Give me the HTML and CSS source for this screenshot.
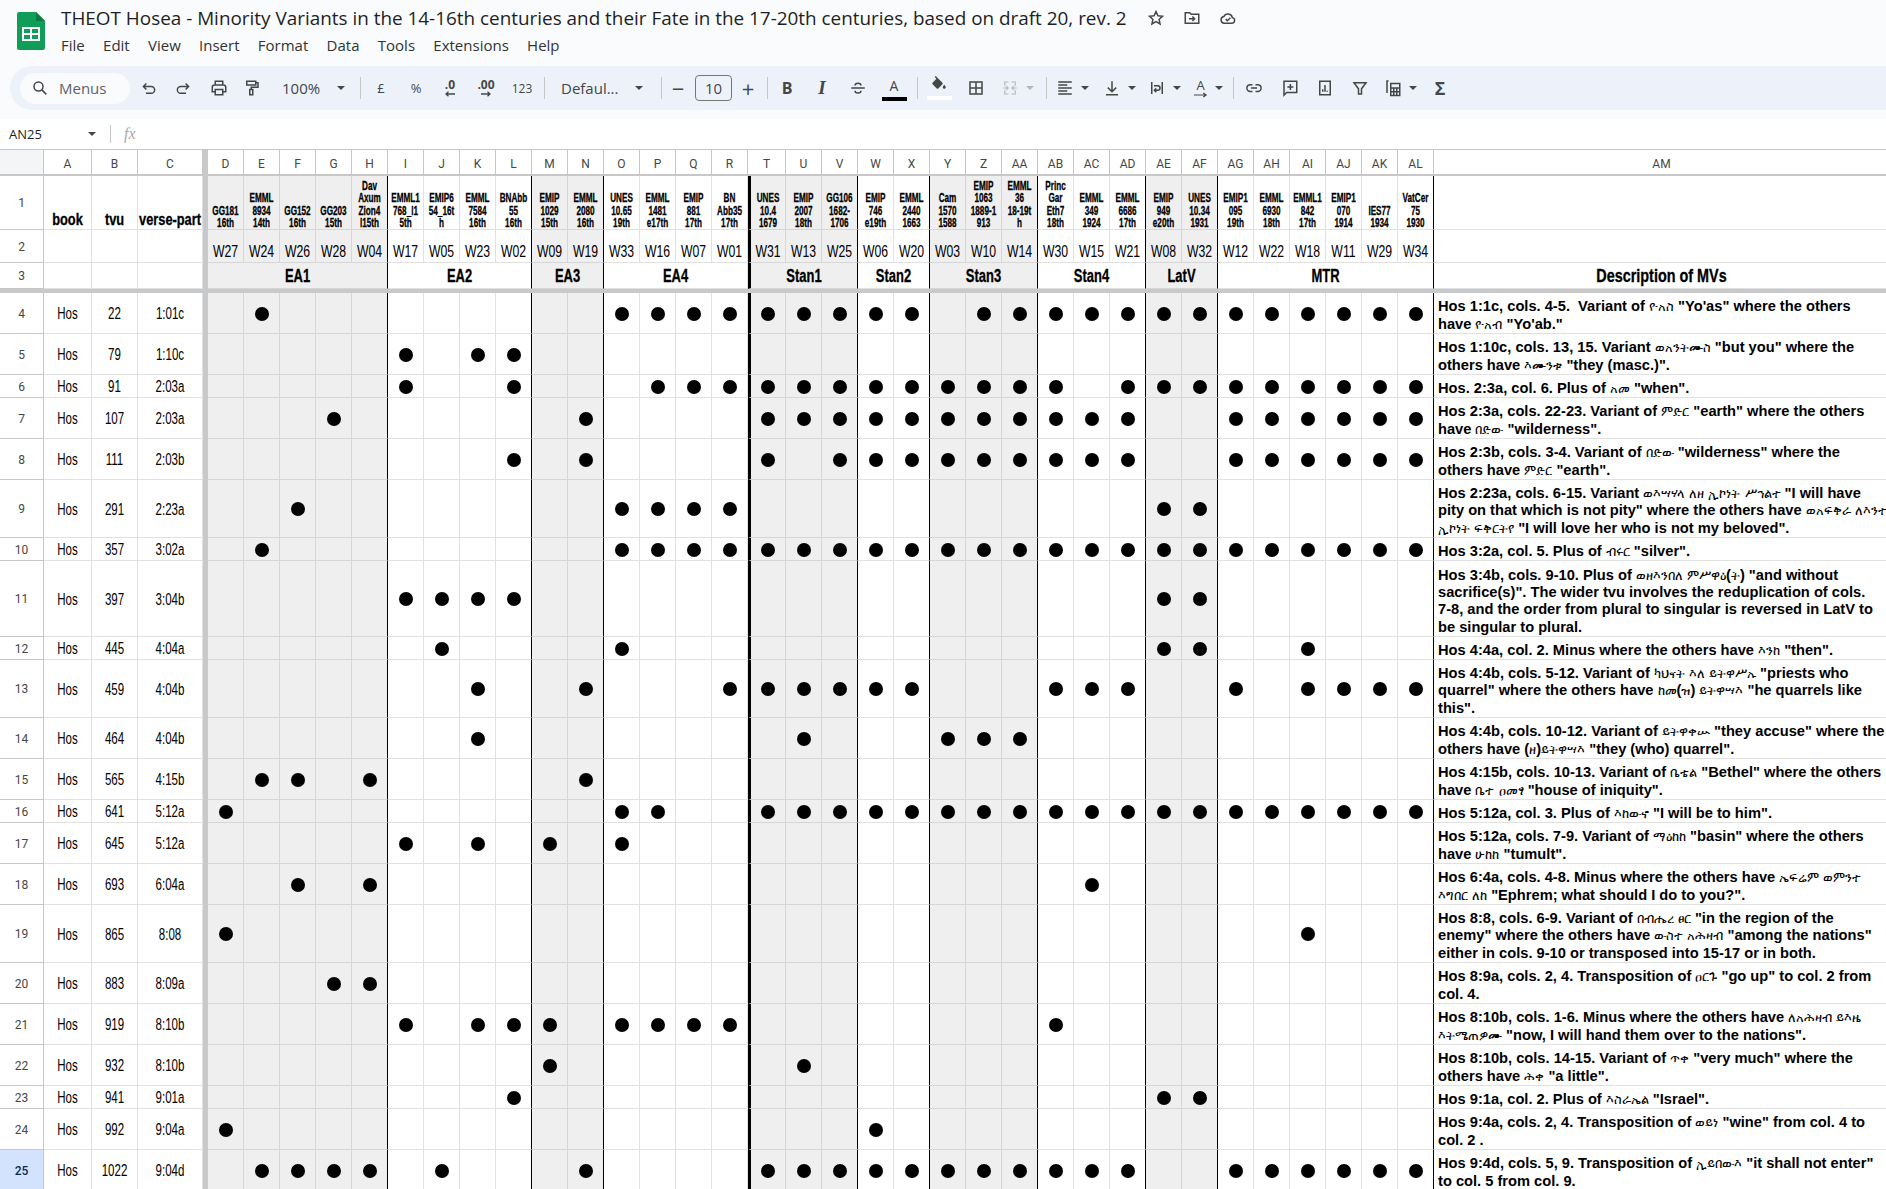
FILE: index.html
```html
<!DOCTYPE html>
<html lang="en">
<head>
    <meta charset="UTF-8">
    <title>THEOT Hosea - Google Sheets</title>
    <link rel="stylesheet" href="styles.css">
</head>
<body>
    <header class="docs-head">
        <div class="title-bar">
            <svg class="logo" viewBox="0 0 28 38"><path fill="#0f9d58" d="M2 0h17l9 9v27a2 2 0 0 1-2 2H2a2 2 0 0 1-2-2V2a2 2 0 0 1 2-2z"/><path fill="#0a7a43" d="M19 0l9 9h-9z"/><path fill="none" stroke="#fff" stroke-width="2" d="M6 16h16v12H6z M6 22h16 M14 16v12"/></svg>
            <div class="title-text">
                <div class="title-row">
                    <span class="doc-title">THEOT Hosea - Minority Variants in the 14-16th centuries and their Fate in the 17-20th centuries, based on draft 20, rev. 2</span>
                    <svg class="ic title-ic" viewBox="0 0 24 24"><path d="M12 3.500l2.600 5.600 6 .7-4.500 4.100 1.300 6-5.400-3.100-5.400 3.100 1.300-6-4.500-4.100 6-.7z"/></svg>
                    <svg class="ic title-ic" viewBox="0 0 24 24"><path d="M3 5h6l2 2h10v12H3z M8 13h7 M12.500 10l3 3-3 3"/></svg>
                    <svg class="ic title-ic" viewBox="0 0 24 24"><path d="M7 19a4.500 4.500 0 0 1-.6-8.900 6 6 0 0 1 11.400 1.400A3.800 3.800 0 0 1 17.500 19z M9 13.500l2.200 2.200 4-4"/></svg>
                </div>
                <nav class="menu-bar">
                    <span>File</span><span>Edit</span><span>View</span><span>Insert</span><span>Format</span><span>Data</span><span>Tools</span><span>Extensions</span><span>Help</span>
                </nav>
            </div>
        </div>

        <div class="toolbar">
            <div class="search-pill">
                <svg class="ic" viewBox="0 0 24 24"><circle cx="10" cy="10" r="6"/><path d="M14.500 14.500l6 6"/></svg>
                <span>Menus</span>
            </div>
            <div class="tb w34"><svg class="ic" viewBox="0 0 24 24"><path d="M8.500 6l-4 4 4 4 M4.500 10H15a4.500 4.500 0 0 1 0 9H8"/></svg></div>
            <div class="tb w34"><svg class="ic flip" viewBox="0 0 24 24"><path d="M8.500 6l-4 4 4 4 M4.500 10H15a4.500 4.500 0 0 1 0 9H8"/></svg></div>
            <div class="tb w38"><svg class="ic" viewBox="0 0 24 24"><path d="M7 8V3h10v5 M7 17H3v-6a3 3 0 0 1 3-3h12a3 3 0 0 1 3 3v6h-4 M7 14h10v7H7z"/></svg></div>
            <div class="tb w28"><svg class="ic" viewBox="0 0 24 24"><path d="M5 3h12v5H5z M17 5h3v6h-9v3 M9 14h4v7H9z"/></svg></div>
            <div class="tb-text zoom-box"><span>100%</span><i class="caret"></i></div>
            <div class="sep s6"></div>
            <div class="tb w34 ml3 txt">£</div>
            <div class="tb w36 txt">%</div>
            <div class="tb w32 dec"><b>.0</b><svg viewBox="0 0 12 6"><path d="M11 3H2 M4.500 .8L2 3l2.500 2.200"/></svg></div>
            <div class="tb w40 dec"><b>.00</b><svg viewBox="0 0 12 6"><path d="M1 3h9 M7.500 .8L10 3 7.500 5.200"/></svg></div>
            <div class="tb w32 txt small">123</div>
            <div class="sep s6"></div>
            <div class="tb-text font-box"><span>Defaul...</span><i class="caret"></i></div>
            <div class="sep s7"></div>
            <div class="tb w32 big">&minus;</div>
            <div class="size-box">10</div>
            <div class="tb w30 big">+</div>
            <div class="sep s4"></div>
            <div class="tb w38 bold">B</div>
            <div class="tb w32 ital">I</div>
            <div class="tb w40"><svg class="ic" viewBox="0 0 24 24"><path d="M8 8.500c0-2 2-3 4-3s4 1 4 3 M3 12h18 M8 15.500c0 2 2 3 4 3s4-1 4-3"/></svg></div>
            <div class="tb w32 color-a"><span>A</span><i class="bar black"></i></div>
            <div class="sep s7"></div>
            <div class="tb w42 fill-btn"><svg class="solid" viewBox="0 0 24 24"><path d="M16.560 8.940L7.620 0 6.210 1.410l2.380 2.380-5.150 5.150c-.59.59-.59 1.540 0 2.120l5.500 5.500c.29.29.68.44 1.060.44s.77-.15 1.060-.44l5.500-5.500c.59-.58.59-1.530 0-2.120zM19 11.500s-2 2.170-2 3.500c0 1.100.9 2 2 2s2-.9 2-2c0-1.330-2-3.500-2-3.500z"/></svg><i class="bar white"></i></div>
            <div class="tb w32"><svg class="ic" viewBox="0 0 24 24"><path d="M4 4h16v16H4z M12 4v16 M4 12h16"/></svg></div>
            <div class="tb split w50 off"><svg class="ic" viewBox="0 0 24 24"><path d="M5 9V4h5 M19 9V4h-5 M5 15v5h5 M19 15v5h-5 M3 12h6 M7 9.500l2.500 2.500L7 14.500 M21 12h-6 M17 9.500L14.500 12l2.500 2.500"/></svg><i class="caret"></i></div>
            <div class="sep s4"></div>
            <div class="tb split w50"><svg class="ic" viewBox="0 0 24 24"><path d="M3 4h18 M3 8h12 M3 12h18 M3 16h12 M3 20h18"/></svg><i class="caret"></i></div>
            <div class="tb split w45"><svg class="ic" viewBox="0 0 24 24"><path d="M12 3v14 M6.500 11.500L12 17l5.500-5.500 M4 21h16"/></svg><i class="caret"></i></div>
            <div class="tb split w45"><svg class="ic" viewBox="0 0 24 24"><path d="M5 4v16 M19 4v16 M8 9h5a3 3 0 0 1 0 6H9 M11 12.500L8.500 15l2.500 2.500"/></svg><i class="caret"></i></div>
            <div class="tb split w42 rot"><div class="rot-a"><span>A</span><svg viewBox="0 0 16 6"><path d="M1 3h13 M11 .8L14 3l-3 2.200"/></svg></div><i class="caret"></i></div>
            <div class="sep s4"></div>
            <div class="tb w40"><svg class="ic" viewBox="0 0 24 24"><path d="M10 7.500H7a4.500 4.500 0 0 0 0 9h3 M14 7.500h3a4.500 4.500 0 0 1 0 9h-3 M8 12h8"/></svg></div>
            <div class="tb w32"><svg class="ic" viewBox="0 0 24 24"><path d="M4 3h17v15H7.500L4 21.500z M12.500 6.500v8 M8.500 10.500h8"/></svg></div>
            <div class="tb w38"><svg class="ic" viewBox="0 0 24 24"><path d="M5 3h14v18H5z M9 17v-3.500 M12 17V8 M15 17v-1.500"/></svg></div>
            <div class="tb w32"><svg class="ic" viewBox="0 0 24 24"><path d="M4 5h16l-6 8v7h-4v-7z"/></svg></div>
            <div class="tb split w48"><svg class="ic" viewBox="0 0 24 24"><path d="M6 2.500H4v16 M9 6h12v16H9z M9 12h12 M9 17h12 M13 12v10 M17 12v10"/></svg><i class="caret"></i></div>
            <div class="tb w32 sigma">Σ</div>
        </div>
    </header>

    <div class="formula-bar">
        <span class="name-box">AN25</span>
        <i class="caret"></i>
        <div class="sep"></div>
        <span class="fx">fx</span>
    </div>

    <div class="grid-wrap">
        <table class="sheet" id="sheet">
            <colgroup id="cols"></colgroup>
            <tbody id="rows"></tbody>
        </table>
    </div>

    <script src="script.js"></script>
</body>
</html>
```

FILE: styles.css
```css
* {
    box-sizing: border-box;
}
html, body {
    margin: 0;
    height: 100%;
    overflow: hidden;
}
body {
    background: #fff;
    font-family: "Open Sans", Roboto, sans-serif;
    color: #1f1f1f;
}

/* top chrome */
.docs-head {
    height: 119px;
    background: #f9fbfd;
}
.title-bar {
    display: flex;
    height: 66px;
}
.logo {
    width: 28px;
    height: 38px;
    margin: 12px 0 0 17px;
    flex: none;
}
.title-text {
    margin-left: 16px;
}
.title-row {
    display: flex;
    align-items: center;
    height: 20px;
    margin-top: 8px;
    white-space: nowrap;
}
.doc-title {
    font-size: 18.900px;
    width: 1086px;
}
.title-ic {
    width: 18px;
    height: 18px;
    margin-right: 18px;
}
.menu-bar {
    display: flex;
    gap: 18.300px;
    margin-top: 7px;
    font-size: 15px;
    color: #333;
}
.ic {
    width: 18px;
    height: 18px;
    fill: none;
    stroke: #444746;
    stroke-width: 2;
    flex: none;
}
.flip {
    transform: scaleX(-1);
}

/* toolbar */
.toolbar {
    display: flex;
    align-items: center;
    height: 44px;
    margin-left: 10px;
    padding-left: 10px;
    background: #edf2fa;
    border-radius: 22px 0 0 22px;
    color: #444746;
    font-size: 15px;
}
.search-pill {
    display: flex;
    align-items: center;
    width: 110px;
    height: 31px;
    margin-right: 2px;
    padding-left: 11px;
    gap: 10px;
    background: #f9fbfd;
    border-radius: 16px;
    color: #5f6368;
    flex: none;
}
.tb {
    display: flex;
    align-items: center;
    justify-content: center;
    height: 30px;
    flex: none;
}
.w28 { width: 28px; }
.w30 { width: 30px; }
.w32 { width: 32px; }
.w34 { width: 34px; }
.w36 { width: 36px; }
.w38 { width: 38px; }
.w40 { width: 40px; }
.w42 { width: 42px; }
.w45 { width: 45px; }
.w48 { width: 48px; }
.w50 { width: 50px; }
.ml3 { margin-left: 3px; }
.sep {
    width: 1px;
    height: 22px;
    background: #c7c7c7;
    flex: none;
}
.s4 { margin-left: 4px; }
.s6 { margin-left: 6px; }
.s7 { margin-left: 7px; }
.caret {
    display: block;
    width: 0;
    height: 0;
    border-left: 4px solid transparent;
    border-right: 4px solid transparent;
    border-top: 4px solid #444746;
    flex: none;
}
.tb-text {
    display: flex;
    align-items: center;
    justify-content: space-between;
    height: 30px;
    flex: none;
}
.zoom-box {
    width: 88px;
    padding: 0 9px 0 16px;
}
.font-box {
    width: 109px;
    padding: 0 11px 0 16px;
}
.txt {
    font-size: 13px;
}
.small {
    font-size: 12px;
}
.dec {
    flex-direction: column;
    line-height: 12px;
    font-size: 12px;
}
.dec b {
    height: 12px;
}
.dec svg {
    width: 12px;
    height: 6px;
    fill: none;
    stroke: #444746;
    stroke-width: 1.300;
}
.big {
    font-size: 22px;
    font-weight: 400;
}
.size-box {
    width: 37px;
    height: 26px;
    margin: 0 1px;
    border: 1px solid #747775;
    border-radius: 4px;
    line-height: 24px;
    text-align: center;
    font-size: 15px;
    flex: none;
}
.bold {
    font-size: 16px;
    font-weight: 700;
}
.ital {
    font-family: "Liberation Serif", serif;
    font-size: 19px;
    font-style: italic;
    font-weight: 700;
}
.color-a, .fill-btn {
    flex-direction: column;
    height: 34px;
}
.color-a span {
    font-size: 14px;
    line-height: 20px;
}
.bar {
    display: block;
    width: 25px;
    height: 4px;
    margin-top: 1px;
}
.black { background: #000; }
.white { background: #fff; margin-top: 2px; }
.solid {
    width: 18px;
    height: 18px;
    fill: #444746;
}
.split {
    gap: 7px;
}
.off .ic {
    stroke: #b4b7ba;
    stroke-width: 1.600;
}
.off .caret {
    border-top-color: #b4b7ba;
}
.rot-a {
    display: flex;
    flex-direction: column;
    align-items: center;
    width: 14px;
    line-height: 14px;
    font-size: 13px;
}
.rot-a svg {
    width: 15px;
    height: 6px;
    fill: none;
    stroke: #444746;
    stroke-width: 1.300;
}
.sigma {
    font-size: 18px;
    font-weight: 700;
}

/* name box + formula */
.formula-bar {
    display: flex;
    align-items: center;
    height: 30px;
    padding-left: 9px;
    background: #fff;
}
.name-box {
    width: 79px;
    font-size: 13px;
    color: #1f1f1f;
}
.formula-bar .sep {
    margin-left: 14px;
    height: 18px;
}
.fx {
    margin-left: 13px;
    font-family: "Liberation Serif", serif;
    font-size: 16px;
    font-style: italic;
    color: #a5a7a9;
}

/* the grid */
.grid-wrap {
    border-top: 1px solid #c4c7c5;
}
.sheet {
    table-layout: fixed;
    width: 1890px;
    border-collapse: separate;
    border-spacing: 0;
    font-family: "Liberation Sans", sans-serif;
    color: #000;
}
.sheet td {
    padding: 0;
    border-right: 1px solid #e1e1e1;
    border-bottom: 1px solid #e1e1e1;
    text-align: center;
    vertical-align: middle;
    overflow: hidden;
    white-space: nowrap;
}
.sheet td.gray {
    background: #efefef;
    border-right-color: #d6d6d6;
    border-bottom-color: #d6d6d6;
}
.sheet td.end {
    border-right-color: #000;
}
.sheet td.thick {
    border-left: 3px solid #000;
}
.sheet td.freeze {
    background: #c7c9cb;
    border: 0;
}
.sheet td.rownum, .sheet td.colhead {
    font-family: Roboto, sans-serif;
    font-size: 12px;
    color: #444746;
    background: #fff;
    border-color: #c7c7c7;
}
.sheet td.rownum {
    padding-top: 1px;
}
.sheet td.colhead {
    border-bottom-width: 2px;
    padding-top: 3px;
}
.sheet td.corner {
    background: #f4f5f6;
}
.sheet td.current {
    background: #d3e3fd;
    color: #0b2a5b;
    font-weight: 500;
}

/* no condensed font here, so the sheet's narrow face is squeezed */
.nar {
    display: block;
    width: 300%;
    margin-left: -100%;
    transform: scaleX(.72);
}
.sheet td.ms {
    vertical-align: bottom;
    font-size: 12px;
    font-weight: 700;
    line-height: 12.200px;
    white-space: pre;
}
.sheet td.ms .nar {
    transform: scaleX(.68);
}
.sheet td.label {
    vertical-align: bottom;
    font-size: 16px;
    font-weight: 700;
}
.sheet td.label .nar {
    transform: scaleX(.8);
}
.sheet td.wit {
    font-size: 17px;
    vertical-align: bottom;
}
.sheet td.grp {
    padding-top: 1px;
    font-size: 18px;
    font-weight: 700;
}
.sheet td.desc-head .nar {
    transform: scaleX(.8);
}
.sheet td.meta {
    padding-top: 2px;
    font-size: 16px;
}
.ms .nar, .label .nar, .grp .nar {
    -webkit-text-stroke: .3px #000;
}
.dot {
    display: block;
    width: 14px;
    height: 14px;
    margin: 1px auto 0;
    background: #000;
    border-radius: 50%;
}
.sheet td.desc {
    padding-left: 4px;
    font-size: 14.670px;
    font-weight: 700;
    line-height: 17.300px;
    text-align: left;
    vertical-align: bottom;
    white-space: pre;
}
.gz {
    font-family: "DejaVu Sans", sans-serif;
    font-size: 12.500px;
    font-weight: 400;
}
```

FILE: script.js
```js
// columns, S is hidden in the sheet
const wit = ['D','E','F','G','H','I','J','K','L','M','N','O','P','Q','R','T','U','V','W','X','Y','Z','AA','AB','AC','AD','AE','AF','AG','AH','AI','AJ','AK','AL'];
const grayCols = ['D','E','F','G','H','M','N','T','U','V','Y','Z','AA','AE','AF'];
const endCols = ['H','L','N','V','X','AA','AD','AF','AL'];

const msNames = ['GG181|16th','EMML|8934|14th','GG152|16th','GG203|15th','Dav|Axum|Zion4|l15th','EMML1|768_l1|5th','EMIP6|54_16t|h','EMML|7584|16th','BNAbb|55|16th','EMIP|1029|15th','EMML|2080|16th','UNES|10.65|19th','EMML|1481|e17th','EMIP|881|17th','BN|Abb35|17th','UNES|10.4|1679','EMIP|2007|18th','GG106|1682-|1706','EMIP|746|e19th','EMML|2440|1663','Cam|1570|1588','EMIP|1063|1889-1|913','EMML|36|18-19t|h','Princ|Gar|Eth7|18th','EMML|349|1924','EMML|6686|17th','EMIP|949|e20th','UNES|10.34|1931','EMIP1|095|19th','EMML|6930|18th','EMML1|842|17th','EMIP1|070|1914','IES77|1934','VatCer|75|1930'];
const sigla = 'W27 W24 W26 W28 W04 W17 W05 W23 W02 W09 W19 W33 W16 W07 W01 W31 W13 W25 W06 W20 W03 W10 W14 W30 W15 W21 W08 W32 W12 W22 W18 W11 W29 W34'.split(' ');
const groups = [['EA1',5],['EA2',4],['EA3',2],['EA4',4],['Stan1',3],['Stan2',2],['Stan3',3],['Stan4',3],['LatV',2],['MTR',6]];

const MTR = 'AG AH AI AJ AK AL';
const data = [
    [4, 22, '1:01c', 41, 'E O P Q R T U V W X Z AA AB AC AD AE AF ' + MTR, 'Hos 1:1c, cols. 4-5.  Variant of ዮአስ "Yo\'as" where the others\nhave ዮአብ "Yo\'ab."'],
    [5, 79, '1:10c', 41, 'I K L', 'Hos 1:10c, cols. 13, 15. Variant ወአንትሙስ "but you" where the\nothers have እሙንቱ "they (masc.)".'],
    [6, 91, '2:03a', 23, 'I L P Q R T U V W X Y Z AA AB AD AE AF ' + MTR, 'Hos. 2:3a, col. 6. Plus of አመ "when".'],
    [7, 107, '2:03a', 41, 'G N T U V W X Y Z AA AB AC AD ' + MTR, 'Hos 2:3a, cols. 22-23. Variant of ምድር "earth" where the others\nhave በድው "wilderness".'],
    [8, 111, '2:03b', 41, 'L N T V W X Y Z AA AB AC AD ' + MTR, 'Hos 2:3b, cols. 3-4. Variant of በድው "wilderness" where the\nothers have ምድር "earth".'],
    [9, 291, '2:23a', 58, 'F O P Q R AE AF', 'Hos 2:23a, cols. 6-15. Variant ወእሣሃላ ለዘ ኢኮነት ሥኅልተ "I will have\npity on that which is not pity" where the others have ወአፍቅራ ለእንተ\nኢኮነት ፍቅርትየ "I will love her who is not my beloved".'],
    [10, 357, '3:02a', 23, 'E O P Q R T U V W X Y Z AA AB AC AD AE AF ' + MTR, 'Hos 3:2a, col. 5. Plus of ብሩር "silver".'],
    [11, 397, '3:04b', 76, 'I J K L AE AF', 'Hos 3:4b, cols. 9-10. Plus of ወዘእንበለ ምሥዋዕ(ት) "and without\nsacrifice(s)". The wider tvu involves the reduplication of cols.\n7-8, and the order from plural to singular is reversed in LatV to\nbe singular to plural.'],
    [12, 445, '4:04a', 23, 'J O AE AF AI', 'Hos 4:4a, col. 2. Minus where the others have እንከ "then".'],
    [13, 459, '4:04b', 58, 'K N R T U V W X AB AC AD AG AI AJ AK AL', 'Hos 4:4b, cols. 5-12. Variant of ካህናት እለ ይትዋሥኡ "priests who\nquarrel" where the others have ከመ(ዝ) ይትዋሣእ "he quarrels like\nthis".'],
    [14, 464, '4:04b', 41, 'K U Y Z AA', 'Hos 4:4b, cols. 10-12. Variant of ይትዋቀሡ "they accuse" where the\nothers have (ዘ)ይትዋሣእ "they (who) quarrel".'],
    [15, 565, '4:15b', 41, 'E F H N', 'Hos 4:15b, cols. 10-13. Variant of ቤቴል "Bethel" where the others\nhave ቤተ ዐመፃ "house of iniquity".'],
    [16, 641, '5:12a', 23, 'D O P T U V W X Y Z AA AB AC AD AE AF ' + MTR, 'Hos 5:12a, col. 3. Plus of እከውኖ "I will be to him".'],
    [17, 645, '5:12a', 41, 'I K M O', 'Hos 5:12a, cols. 7-9. Variant of ማዕከከ "basin" where the others\nhave ሁከከ "tumult".'],
    [18, 693, '6:04a', 41, 'F H AC', 'Hos 6:4a, cols. 4-8. Minus where the others have ኤፍሬም ወምንተ\nእግበር ለከ "Ephrem; what should I do to you?".'],
    [19, 865, '8:08', 58, 'D AI', 'Hos 8:8, cols. 6-9. Variant of በብሔረ ፀር "in the region of the\nenemy" where the others have ውስተ አሕዛብ "among the nations"\neither in cols. 9-10 or transposed into 15-17 or in both.'],
    [20, 883, '8:09a', 41, 'G H', 'Hos 8:9a, cols. 2, 4. Transposition of ዐርጉ "go up" to col. 2 from\ncol. 4.'],
    [21, 919, '8:10b', 41, 'I K L M O P Q R AB', 'Hos 8:10b, cols. 1-6. Minus where the others have ለአሕዛብ ይእዜ\nእትሜጠዎሙ "now, I will hand them over to the nations".'],
    [22, 932, '8:10b', 41, 'M U', 'Hos 8:10b, cols. 14-15. Variant of ጥቀ "very much" where the\nothers have ሕቀ "a little".'],
    [23, 941, '9:01a', 23, 'L AE AF', 'Hos 9:1a, col. 2. Plus of እስራኤል "Israel".'],
    [24, 992, '9:04a', 41, 'D W', 'Hos 9:4a, cols. 2, 4. Transposition of ወይነ "wine" from col. 4 to\ncol. 2 .'],
    [25, 1022, '9:04d', 41, 'E F G H J N T U V W X Y Z AA AB AC AD ' + MTR, 'Hos 9:4d, cols. 5, 9. Transposition of ኢይበውእ "it shall not enter"\nto col. 5 from col. 9.']
];

function cell(row, cls, text) {
    const td = document.createElement('td');
    td.className = cls;
    if (text !== undefined) td.textContent = text;
    row.appendChild(td);
    return td;
}

// cell whose text is squeezed to the sheet's narrow face
function narrow(row, cls, text) {
    const td = cell(row, cls);
    const span = document.createElement('span');
    span.className = 'nar';
    span.textContent = text;
    td.appendChild(span);
    return td;
}

function addRow(tbody, height) {
    const tr = document.createElement('tr');
    tr.style.height = height + 'px';
    tbody.appendChild(tr);
    return tr;
}

function witClass(col) {
    let c = '';
    if (grayCols.includes(col)) c += ' gray';
    if (endCols.includes(col)) c += ' end';
    if (col === 'T') c += ' thick';
    return c;
}

// col widths
const colgroup = document.getElementById('cols');
const widths = [44, 48, 46, 65, 5].concat(wit.map(c => c === 'T' ? 38 : 36), [456]);
widths.forEach(w => {
    const col = document.createElement('col');
    col.style.width = w + 'px';
    colgroup.appendChild(col);
});

const tbody = document.getElementById('rows');

// column letters
let tr = addRow(tbody, 26);
cell(tr, 'colhead corner');
['A', 'B', 'C'].forEach(l => cell(tr, 'colhead', l));
cell(tr, 'freeze');
wit.concat('AM').forEach(l => cell(tr, 'colhead', l));

// row 1 - manuscripts
tr = addRow(tbody, 54);
cell(tr, 'rownum', '1');
['book', 'tvu', 'verse-part'].forEach(l => narrow(tr, 'label', l));
cell(tr, 'freeze');
wit.forEach((c, i) => {
    narrow(tr, 'ms' + witClass(c), msNames[i].split('|').join('\n'));
});
cell(tr, 'ms');

// row 2 - sigla
tr = addRow(tbody, 33);
cell(tr, 'rownum', '2');
cell(tr, 'wit'); cell(tr, 'wit'); cell(tr, 'wit');
cell(tr, 'freeze');
wit.forEach((c, i) => narrow(tr, 'wit' + witClass(c), sigla[i]));
cell(tr, 'wit');

// row 3 - groups
tr = addRow(tbody, 26);
cell(tr, 'rownum', '3');
cell(tr, 'grp'); cell(tr, 'grp'); cell(tr, 'grp');
cell(tr, 'freeze');
let at = 0;
groups.forEach(g => {
    const last = wit[at + g[1] - 1];
    const td = narrow(tr, 'grp' + witClass(wit[at]).replace(' end', '') + (endCols.includes(last) ? ' end' : ''), g[0]);
    td.colSpan = g[1];
    at += g[1];
});
narrow(tr, 'grp desc-head', 'Description of MVs');

// frozen line
tr = addRow(tbody, 4);
cell(tr, 'freeze').colSpan = widths.length;

// data rows
data.forEach(d => {
    const row = addRow(tbody, d[3]);
    cell(row, 'rownum' + (d[0] === 25 ? ' current' : ''), d[0]);
    narrow(row, 'meta', 'Hos');
    narrow(row, 'meta', d[1]);
    narrow(row, 'meta', d[2]);
    cell(row, 'freeze');
    const dots = d[4].split(' ');
    wit.forEach(c => {
        const td = cell(row, witClass(c));
        if (dots.includes(c)) td.innerHTML = '<span class="dot"></span>';
    });
    const desc = cell(row, 'desc');
    d[5].split('\n').forEach(line => {
        const div = document.createElement('div');
        div.innerHTML = line.replace(/[\u1200-\u137F]+/g, m => '<span class="gz">' + m + '</span>');
        desc.appendChild(div);
    });
});
```
